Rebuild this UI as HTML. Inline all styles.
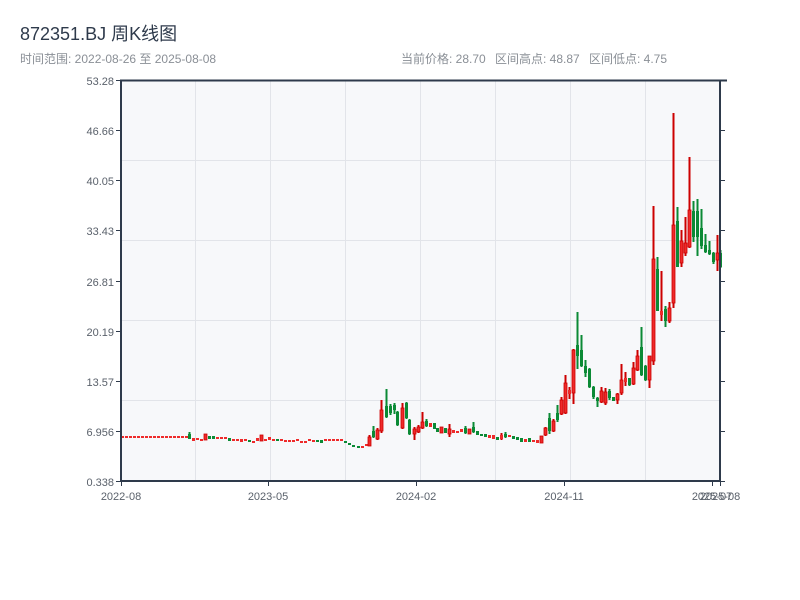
<!DOCTYPE html>
<html><head><meta charset="utf-8"><style>
html,body{margin:0;padding:0;background:#fff;width:800px;height:600px;overflow:hidden}
svg{display:block}
text{font-family:"Liberation Sans","Noto Sans CJK SC",sans-serif}
</style></head><body>
<svg id="s" width="800" height="600" xmlns="http://www.w3.org/2000/svg">
<text x="20" y="40" font-size="18" fill="#2e3a4b">872351.BJ 周K线图</text>
<text x="20" y="63" font-size="12" fill="#8a8f96">时间范围: 2022-08-26 至 2025-08-08</text>
<text x="401" y="63" font-size="12" fill="#8a8f96">当前价格: 28.70</text>
<text x="495" y="63" font-size="12" fill="#8a8f96">区间高点: 48.87</text>
<text x="589" y="63" font-size="12" fill="#8a8f96">区间低点: 4.75</text>
<rect x="121" y="80" width="599" height="401" fill="#f7f8fa"/>
<g stroke="#e2e4e9" stroke-width="1">
<line x1="195.5" y1="80" x2="195.5" y2="481"/><line x1="270.5" y1="80" x2="270.5" y2="481"/>
<line x1="345.5" y1="80" x2="345.5" y2="481"/><line x1="420.5" y1="80" x2="420.5" y2="481"/>
<line x1="495.5" y1="80" x2="495.5" y2="481"/><line x1="570.5" y1="80" x2="570.5" y2="481"/>
<line x1="645.5" y1="80" x2="645.5" y2="481"/>
<line x1="121" y1="160.5" x2="720" y2="160.5"/><line x1="121" y1="240.5" x2="720" y2="240.5"/>
<line x1="121" y1="320.5" x2="720" y2="320.5"/><line x1="121" y1="400.5" x2="720" y2="400.5"/>
</g>
<g id="c"></g>
<g stroke="#2e3a4b" stroke-width="2" fill="none">
<line x1="121" y1="80" x2="121" y2="482"/>
<line x1="120" y1="481" x2="721" y2="481"/>
<line x1="120" y1="80.5" x2="727" y2="80.5"/>
<line x1="720" y1="80" x2="720" y2="482"/>
</g>
<g id="t" stroke="#2e3a4b" stroke-width="1"></g>
<g font-size="11" fill="#5a616b" text-anchor="end">
<text x="114" y="85">53.28</text><text x="114" y="135">46.66</text><text x="114" y="185">40.05</text>
<text x="114" y="235">33.43</text><text x="114" y="286">26.81</text><text x="114" y="336">20.19</text>
<text x="114" y="386">13.57</text><text x="114" y="436">6.956</text><text x="114" y="486">0.338</text>
</g>
<g font-size="11" fill="#5a616b" text-anchor="middle">
<text x="121" y="500">2022-08</text><text x="268" y="500">2023-05</text><text x="416" y="500">2024-02</text>
<text x="564" y="500">2024-11</text><text x="712" y="500">2025-07</text><text x="720" y="500">2025-08</text>
</g>
</svg>
<script>
var NS="http://www.w3.org/2000/svg";
function el(p,n,a){var e=document.createElementNS(NS,n);for(var k in a)e.setAttribute(k,a[k]);p.appendChild(e);return e;}
var t=document.getElementById('t');
[80,130,180,230,281,331,381,431,481].forEach(function(y){el(t,'line',{x1:116,y1:y+.5,x2:121,y2:y+.5});el(t,'line',{x1:720,y1:y+.5,x2:725,y2:y+.5});});
[121,268,416,564,712,720].forEach(function(x){el(t,'line',{x1:x+.5,y1:481,x2:x+.5,y2:486});});
var d=[];
for(var k=0;k<17;k++)d.push([121+4*k,'r',436,438]);
var s=[[188.3,'g',432,439,434,439],[192.3,'r',438,441],[196.3,'r',438,440],[200.3,'r',439,441],[204.3,'r',434,440],[208.3,'g',436,439],[212.3,'g',436,439],[216.3,'r',437,439],[220.3,'r',437,439],[224.3,'r',437,439],[228.3,'g',438,441],[232.3,'r',439,441],[236.3,'r',439,441],[240.3,'r',439,442],[244.3,'r',439,441],[248.3,'g',440,442],[252.3,'r',441,442],[256.3,'r',438,441],[260.3,'r',435,441],[264.3,'r',439,441],[268.3,'r',437,440],[272.3,'r',439,441],[276.3,'g',439,441],[280.3,'r',439,441],[284.3,'r',440,441],[288.3,'r',440,441],[292.3,'r',440,441],[296.3,'r',439,441],[300.3,'r',441,442],[304.3,'r',441,442],[308.3,'r',439,441],[312.3,'r',440,441],[316.3,'g',440,442],[320.3,'g',440,443],[324.3,'r',439,441],[328.3,'r',439,441],[332.3,'r',439,441],[336.3,'r',439,441],[340.3,'r',439,441],
[344,'g',441,443],[348.3,'g',443,445],[352.3,'g',445,447],[356.7,'g',446,448],[360.7,'r',446,448],[364.7,'r',444,446],[368.3,'r',435,446,437,446],[372.3,'g',426,438,431,437],[376.3,'r',428,440,430,439],[380.3,'r',400,433,410,431],[384.7,'g',389,418,406,417],[388.7,'g',404,415,406,413],[392.7,'g',403,414,405,410],[396.3,'g',411,426,412,425],[400.7,'r',403,429,408,428],[404.7,'g',402,419,403,418],[408.3,'g',419,435,420,434],[412.7,'r',427,440,429,434],[416.7,'r',425,433,427,432],[420.7,'r',412,429,422,428],[424.7,'g',419,427,421,426],[428.7,'r',423,427],[432.7,'g',423,429],[436,'g',428,432],[440.3,'r',427,433],[444.3,'g',428,433],[448.3,'r',424,437,429,434],[452.3,'r',430,433],[456.3,'r',431,433],[460.3,'r',429,432],[464.3,'g',426,434,428,433],[468.3,'r',429,434],[472.3,'g',422,433,427,432],[476.3,'g',431,435],[480.3,'g',434,436],[484.3,'g',434,437],[488.3,'r',435,438],[492.3,'r',435,439],[496.3,'g',437,440],[500.3,'r',433,440,435,439],[504.3,'g',432,438,434,437],[508.3,'r',435,437],[512.3,'g',436,439],[516.3,'g',437,440],[520.3,'g',438,442],[524.3,'r',439,442],[528.3,'g',438,442],[532.3,'r',440,442],[536.3,'r',440,443],[540.3,'r',436,443],[544.3,'r',427,436,428,435],[548.3,'g',413,434,418,431],
[552.3,'r',419,432,421,431],[556.3,'g',405,422,413,420],[560.3,'r',397,415,400,414],[564.3,'r',375,414,383,413],[568.3,'r',387,399,390,394],[572.3,'r',349,404,350,393],[576.3,'g',312,369,345,356],[580.3,'g',335,367,350,366],[584.3,'g',360,377,366,373],[588.3,'g',368,388,369,387],[592.3,'g',386,399,387,397],[596.3,'g',397,407,398,401],[600.3,'r',387,403,391,402],[604.3,'r',388,405,392,403],[608.3,'g',389,400,391,398],[612.3,'g',397,401],[616.3,'r',393,404,394,400],
[620.3,'r',364,395,380,393],[624.3,'r',372,386,378,382],[628.3,'g',378,386,378,385],[632.3,'r',362,385,368,384],[636.3,'r',350,371,356,370],[640.3,'g',327,376,347,375],[644.3,'g',365,381,366,380],[648.3,'r',356,388,356,380],[652.3,'r',206,365,259,361],[656.3,'g',257,311,269,311],[660.3,'r',271,321,311,315],[664.3,'g',306,327,309,321],[668.3,'r',302,323,308,321],[672.3,'r',113,308,225,303],[676.3,'g',207,267,221,267],[680.3,'r',230,267,241,263],[684.3,'r',217,256,243,253],[688.3,'r',157,248,210,247],[692.3,'g',201,242,211,237],[696.3,'g',199,256,211,237],[700.3,'g',209,249,228,246],[704.3,'g',234,253,245,252],[708.3,'g',241,255,250,254],[712.3,'g',252,264,253,262],[716.3,'r',235,271,253,260],[719.3,'g',250,268,253,267]];
d=d.concat(s);
var g=document.getElementById('c');
d.forEach(function(c){
  var x=Math.round(c[0]),col=c[1]=='r'?'#cc0000':'#0b8a35',fill=c[1]=='r'?'#ee2a2a':'#0b8a35';
  var bt=c.length>4?c[4]:c[2],bb=c.length>4?c[5]:c[3];
  el(g,'rect',{x:x+0.5,y:c[2],width:2,height:Math.max(1,c[3]-c[2]),fill:col});
  el(g,'rect',{x:x,y:bt,width:3,height:Math.max(2,bb-bt),fill:fill,stroke:(c[1]=='r'&&bb-bt>4)?col:'none','stroke-width':0.8});
});
</script>
</body></html>
